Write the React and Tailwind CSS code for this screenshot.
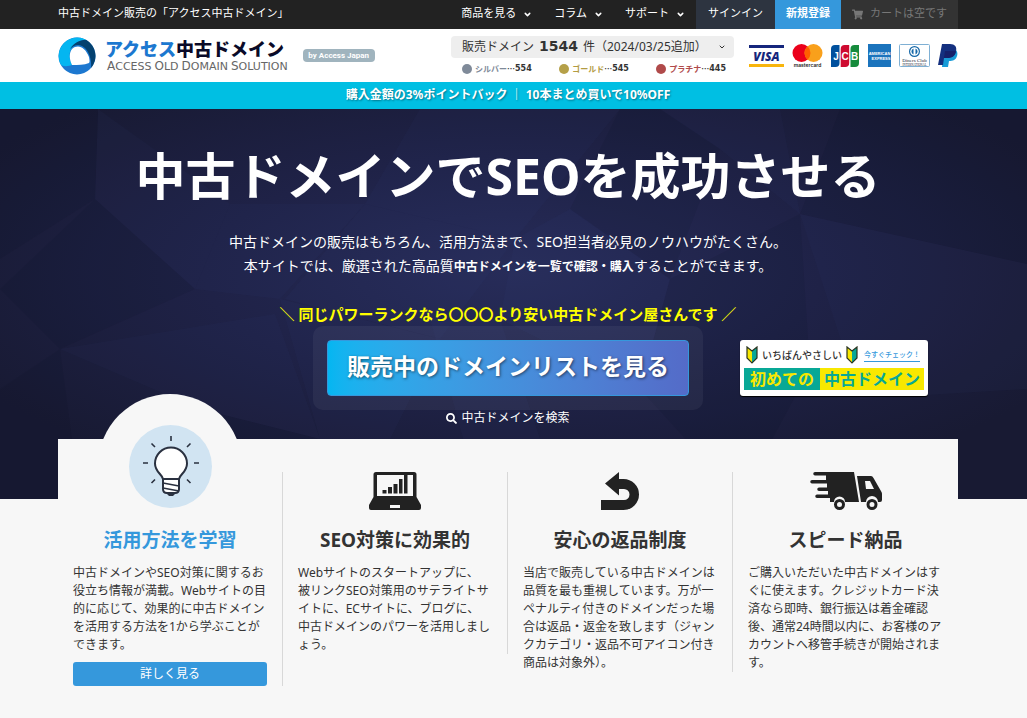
import React from 'react';
import { FaShoppingCart, FaSearch } from 'react-icons/fa';
import { ChevronDown } from 'lucide-react';

const navItems = ['商品を見る', 'コラム', 'サポート'];

const taglineWords = ['Access', 'Old', 'Domain', 'Solution'];

const ranks = [
  { name: 'シルバー', count: 554, text: 'text-[#7f8a99]', dot: 'bg-[#7f8a99]' },
  { name: 'ゴールド', count: 545, text: 'text-[#b39c43]', dot: 'bg-[#b5a048]' },
  { name: 'プラチナ', count: 445, text: 'text-[#b04a4a]', dot: 'bg-[#b04a4a]' }
];

const LogoMark = () => (
  <svg className="w-[38px] h-[38px] shrink-0" viewBox="0 0 38 38" aria-hidden="true">
    <circle cx="19" cy="19" r="18.5" fill="#1c78d0" />
    <path d="M28 2.800A18.500 18.500 0 0 0 3 28C7 30 11 29 14 28C10 20 11 12 16 9C19 5 23 3 28 2.800Z" fill="#04b6f1" />
    <path d="M28 2.800A18.500 18.500 0 0 1 33 31C34 21 30 12 24 9C20 7 16 8 12 12C16 6 21 3 28 2.800Z" fill="#04416f" />
    <path d="M14 12C20 7 27 10 31 20C31.500 23 32 25 31 26C26 28 20 28 14 28C11 22 11 16 14 12Z" fill="#fff" />
  </svg>
);

const PaymentLogos = () => (
  <div className="flex items-center justify-between w-[209px]">
    <svg className="w-[35px] h-[22px]" viewBox="0 0 35 22" role="img" aria-label="VISA">
      <path d="M0 0h35v3H0z" fill="#15267c" />
      <path d="M0 19h35v3H0z" fill="#f8b50c" />
      <text x="17.500" y="15.500" textAnchor="middle" fontFamily="Open Sans, sans-serif" fontWeight="800" fontStyle="italic" fontSize="12" fill="#15267c">VISA</text>
    </svg>
    <svg className="w-[31px] h-6" viewBox="0 0 31 24" role="img" aria-label="mastercard">
      <circle cx="9.500" cy="9" r="9" fill="#eb001b" />
      <circle cx="21.500" cy="9" r="9" fill="#f9a01b" />
      <path d="M15.500 2.300a9 9 0 0 1 0 13.400a9 9 0 0 1 0-13.400Z" fill="#ff5f00" />
      <text x="15.500" y="23" textAnchor="middle" fontFamily="Inter, sans-serif" fontWeight="600" fontSize="5" fill="#222">mastercard</text>
    </svg>
    <svg className="w-7 h-[22px]" viewBox="0 0 28 22" role="img" aria-label="JCB">
      <path d="M4 0h4.500v18a4 4 0 0 1-4 4H0V4a4 4 0 0 1 4-4Z" fill="#00509d" />
      <path d="M13.700 0h4.500v18a4 4 0 0 1-4 4H9.700V4a4 4 0 0 1 4-4Z" fill="#ce0a30" />
      <path d="M23.500 0H28v18a4 4 0 0 1-4 4h-4.500V4a4 4 0 0 1 4-4Z" fill="#168b3c" />
      <g fontFamily="Liberation Sans, sans-serif" fontWeight="700" fontSize="10" fill="#fff" textAnchor="middle">
        <text x="5" y="14.500">J</text>
        <text x="14" y="14.500">C</text>
        <text x="23.500" y="14.500">B</text>
      </g>
    </svg>
    <svg className="w-[23px] h-[23px]" viewBox="0 0 23 23" role="img" aria-label="American Express">
      <path d="M0 0h23v23H0z" fill="#1b74bd" />
      <text x="11.500" y="11" textAnchor="middle" fontFamily="Liberation Sans, sans-serif" fontWeight="700" fontSize="4" fill="#fff">AMERICAN</text>
      <text x="13" y="16" textAnchor="middle" fontFamily="Liberation Sans, sans-serif" fontWeight="700" fontSize="4" fill="#fff">EXPRESS</text>
    </svg>
    <svg className="w-[31px] h-[23px]" viewBox="0 0 31 23" role="img" aria-label="Diners Club International">
      <rect x="0.500" y="0.500" width="30" height="22" rx="1" fill="#fff" stroke="#7fb0d4" />
      <circle cx="15.500" cy="7.500" r="5.500" fill="#1668a8" />
      <circle cx="15.500" cy="7.500" r="4.300" fill="#fff" />
      <path d="M14.500 4.500v6a3.200 3.200 0 0 1 0-6ZM16.500 4.500v6a3.200 3.200 0 0 0 0-6Z" fill="#1668a8" />
      <text x="15.500" y="17.500" textAnchor="middle" fontFamily="Liberation Serif, serif" fontSize="5" fill="#223">Diners Club</text>
      <text x="15.500" y="21.500" textAnchor="middle" fontFamily="Liberation Serif, serif" fontSize="3" fill="#223">INTERNATIONAL</text>
    </svg>
    <svg className="w-5 h-6" viewBox="0 0 20 24" role="img" aria-label="PayPal">
      <path d="M6 5h10c3 1 4 4 3 7c-1 4-4 5-8 5l-1 6H4Z" fill="#179bd7" />
      <path d="M4 0h8c5 0 7 3 6 7c-1 5-4 7-9 7H6l-1 7H0Z" fill="#14307f" />
      <path d="M7 7h9c1.500 0 2 .5 2 .5c-1 4.500-4 6.500-9 6.500H6Z" fill="#15206a" />
    </svg>
  </div>
);

const HeroPattern = () => (
  <svg className="absolute inset-0 w-full h-full" viewBox="0 0 1027 390" preserveAspectRatio="none" aria-hidden="true">
    <defs>
      <radialGradient id="heroGlow" cx="0.5" cy="0.42" r="0.6">
        <stop offset="0" stopColor="#272c59" />
        <stop offset="0.5" stopColor="#1f2247" />
        <stop offset="1" stopColor="#181a33" />
      </radialGradient>
    </defs>
    <path d="M0 0h1027v390H0z" fill="url(#heroGlow)" />
    <g fill="#5a66c8" fillOpacity="0.035">
      <path d="M98 0 230 95 195 180 95 90Z" />
      <path d="M420 0 620 0 515 130 365 95Z" />
      <path d="M230 95 365 95 280 190 195 180Z" />
      <path d="M515 130 570 100 670 170 640 280 500 210Z" />
      <path d="M365 95 515 130 440 230 285 190Z" />
      <path d="M660 0 780 0 800 105 720 40Z" />
      <path d="M60 240 275 205 320 330 200 300Z" />
      <path d="M430 210 500 210 560 390 480 390Z" />
      <path d="M800 105 1027 155 1027 280 860 290Z" />
      <path d="M280 190 440 230 360 390 320 330Z" />
    </g>
    <g fill="#05071a" fillOpacity="0.08">
      <path d="M0 0 98 0 95 90 0 150Z" />
      <path d="M840 0 1027 0 1027 155 800 105Z" />
      <path d="M0 180 95 90 195 180 60 240Z" />
      <path d="M620 0 660 0 720 40 670 170 570 100Z" />
      <path d="M640 280 670 170 800 105 810 260 740 390Z" />
      <path d="M0 280 60 240 80 390 0 390Z" />
      <path d="M200 300 320 330 360 390 180 390Z" />
    </g>
  </svg>
);

const BulbIcon = () => (
  <svg className="w-[83px] h-[83px]" viewBox="0 0 83 83" aria-hidden="true">
    <circle cx="41.500" cy="41.500" r="41.500" fill="#d1e4f2" />
    <g stroke="#2a3140" strokeWidth="1.600" fill="none">
      <path d="M42 11v5M22.500 18.500l3.500 3.500M61.500 18.500l-3.500 3.500M14 38h5M65 38h5M22.500 58l3.500-3.500M61.500 58l-3.500-3.500" />
      <path d="M34 54C33 49 26 47 26 38.500a16 16 0 0 1 32 0C58 47 51 49 50 54Z" fill="#fff" strokeWidth="2" />
      <path d="M34 54v10q0 4 4 4h8q4 0 4-4V54Z" fill="#fff" strokeWidth="2" />
      <path d="M34 58l16 3M34 63l16 3" />
    </g>
    <path d="M37 68h10l-3 3h-4Z" fill="#2a3140" />
  </svg>
);

const LaptopIcon = () => (
  <svg className="w-[52px] h-[38px]" viewBox="0 0 52 38" fill="#222" aria-hidden="true">
    <path fillRule="evenodd" d="M7 0h38q2.500 0 2.500 2.500V25l4.500 8v3q0 2-2 2H2q-2 0-2-2v-3l4.500-8V2.500Q4.500 0 7 0ZM8 3v21h36V3ZM21 33v3h10v-3Z" />
    <path d="M13.500 18h4v3.500h-4zM19 15h4v6.500h-4zM24.500 12h4v9.500h-4zM30 7h3.500v14.500H30zM35 3h3.500v18.500H35z" />
  </svg>
);

const ReturnIcon = () => (
  <svg className="w-[38px] h-[38px]" viewBox="0 0 38 38" fill="#222" aria-hidden="true">
    <path d="M4 11.500 18 0v7h4.500a15.500 15.500 0 0 1 0 31H0V28h23a5.500 5.500 0 0 0 0-11h-5v6.500Z" />
  </svg>
);

const TruckIcon = () => (
  <svg className="w-[72px] h-[38px]" viewBox="0 0 72 38" fill="#222" aria-hidden="true">
    <path d="M5 0h39l5 30H35a5.500 5.500 0 0 0-11 0h-4v-4H7a1.500 1.500 0 0 1 0-3.500h11v-3.500H9a1.700 1.700 0 0 1 0-3.500h8v-4H2a1.700 1.700 0 0 1 0-3.500h14V3.500H5A1.700 1.700 0 0 1 5 0Z" />
    <path fillRule="evenodd" d="M47 4h14q1.500 0 2.500 2l8 14q.5 1 .5 2v6q0 2-2 2h-2a6 6 0 0 0-12 0h-5ZM55 9l1 8h8l-4-8Z" />
    <path fillRule="evenodd" d="M29.500 27a5.500 5.500 0 1 1 0 11a5.500 5.500 0 0 1 0-11Zm0 3a2.500 2.500 0 1 0 0 5a2.500 2.500 0 0 0 0-5ZM62 27a5.500 5.500 0 1 1 0 11a5.500 5.500 0 0 1 0-11Zm0 3a2.500 2.500 0 1 0 0 5a2.500 2.500 0 0 0 0-5Z" />
  </svg>
);

const BeginnerMark = () => (
  <svg className="w-3 h-[18px] shrink-0" viewBox="0 0 12 18" aria-hidden="true">
    <path d="M1 1 6 5v12L1 12Z" fill="#f8e800" />
    <path d="M11 1 6 5v12l5-5Z" fill="#08a896" />
    <path d="M1 1 6 5 11 1v11l-5 5-5-5Z" fill="none" stroke="#2b3420" strokeWidth="1.200" />
  </svg>
);

const features = [
  {
    title: '活用方法を学習',
    lines: ['中古ドメインやSEO対策に関するお', '役立ち情報が満載。Webサイトの目', '的に応じて、効果的に中古ドメイン', 'を活用する方法を1から学ぶことが', 'できます。'],
    highlight: true
  },
  {
    title: 'SEO対策に効果的',
    lines: ['Webサイトのスタートアップに、', '被リンクSEO対策用のサテライトサ', 'イトに、ECサイトに、ブログに、', '中古ドメインのパワーを活用しまし', 'ょう。'],
    icon: <LaptopIcon />
  },
  {
    title: '安心の返品制度',
    lines: ['当店で販売している中古ドメインは', '品質を最も重視しています。万が一', 'ペナルティ付きのドメインだった場', '合は返品・返金を致します（ジャン', 'クカテゴリ・返品不可アイコン付き', '商品は対象外）。'],
    icon: <ReturnIcon />
  },
  {
    title: 'スピード納品',
    lines: ['ご購入いただいた中古ドメインはす', 'ぐに使えます。クレジットカード決', '済なら即時、銀行振込は着金確認', '後、通常24時間以内に、お客様のア', 'カウントへ移管手続きが開始されま', 'す。'],
    icon: <TruckIcon />
  }
];

const Container = ({ className, children }) => (
  <div className="pr-[11px]">
    <div className={`mx-auto max-w-[900px] ${className || ''}`}>{children}</div>
  </div>
);

const App = () => {
  return (
    <div className="min-h-screen bg-[#f7f7f7] text-[#333] font-['Noto_Sans','Noto_Sans_CJK_JP',sans-serif]">
      {/* Top bar */}
      <div className="bg-[#222] text-white text-[11px]">
        <Container className="flex items-stretch justify-between h-[29px]">
          <p className="leading-[26px]">中古ドメイン販売の「アクセス中古ドメイン」</p>
          <nav className="flex items-stretch leading-[26px]">
            {navItems.map(item => (
              <button key={item} type="button" className="flex items-center gap-[7px] px-[11px]">
                <span className="h-full">{item}</span>
                <ChevronDown className="w-[9px] h-[9px]" strokeWidth={4} />
              </button>
            ))}
            <a href="#signin" className="bg-[#2d3440] px-3">サインイン</a>
            <a href="#signup" className="bg-[#3598dc] px-[11px] font-bold">新規登録</a>
            <a href="#cart" className="flex items-center gap-[7px] px-[11px] bg-[#333] text-[#777]">
              <FaShoppingCart className="w-[11px] h-[11px]" />
              <span className="h-full">カートは空です</span>
            </a>
          </nav>
        </Container>
      </div>

      {/* Header */}
      <header className="bg-white">
        <Container className="flex items-center h-[53px]">
          <a href="#home" className="flex items-center gap-[9px]">
            <LogoMark />
            <span className="block">
              <span className="block text-[18px] leading-[22px] font-black text-[#0a0a28]">
                <span className="text-[#1c78d0]">アクセス</span>中古ドメイン
              </span>
              <span className="flex gap-[3px] pl-[2px] text-[11px] leading-[12px] uppercase text-[#666] font-['DejaVu_Sans',sans-serif]">
                {taglineWords.map(word => (
                  <span key={word} className="block first-letter:text-[12px]">{word}</span>
                ))}
              </span>
            </span>
          </a>
          <span className="ml-[15px] w-[72px] rounded-sm bg-[#a0b4be] text-center text-[8px] leading-[13px] font-bold text-white whitespace-nowrap font-['Roboto',sans-serif]">
            by Access Japan
          </span>
          <div className="ml-auto mr-[15px] w-[283px]">
            <button type="button" className="flex items-center w-full h-[22px] pl-[11px] pr-2 rounded-sm bg-[#eee] text-[12px] whitespace-nowrap">
              <span>販売ドメイン</span>
              <strong className="mx-[5px] text-[14px] font-['DejaVu_Sans',sans-serif]">1544</strong>
              <span>件（2024/03/25追加）</span>
              <ChevronDown className="ml-auto w-2 h-2" strokeWidth={3} />
            </button>
            <ul className="flex justify-between mt-1 pl-[11px] pr-2 text-[8px] leading-[14px] font-bold">
              {ranks.map(rank => (
                <li key={rank.name} className="flex items-center">
                  <span className={`w-[10px] h-[10px] mr-[3px] rounded-full ${rank.dot}`} />
                  <span className={rank.text}>{rank.name}</span>
                  <span className="font-['Noto_Sans_CJK_JP',sans-serif]">…</span>
                  <span className="font-['DejaVu_Sans',sans-serif]">{rank.count}</span>
                </li>
              ))}
            </ul>
          </div>
          <PaymentLogos />
        </Container>
      </header>

      {/* Campaign banner */}
      <div className="bg-[#00bfe3]">
        <Container className="h-[27px] text-center text-[12px] leading-[26px] font-bold text-white text-shadow-[1px_1px_2px_#0006]">
          購入金額の3%ポイントバック ｜ 10本まとめ買いで10%OFF
        </Container>
      </div>

      {/* Hero */}
      <section className="relative bg-[#1c1f3c] text-white overflow-hidden">
        <HeroPattern />
        <div className="relative">
          <Container className="pt-[37px] pb-[73px] text-center">
            <h1 className="text-[50px] leading-[60px] font-bold">中古ドメインでSEOを成功させる</h1>
            <p className="mt-6 text-[14px] leading-6">
              中古ドメインの販売はもちろん、活用方法まで、SEO担当者必見のノウハウがたくさん。
              <br />
              本サイトでは、厳選された高品質<strong className="text-[12px]">中古ドメインを一覧で確認・購入</strong>することができます。
            </p>
            <p className="mt-[23px] text-[15px] leading-6 font-bold text-[#ff0]">
              ＼ 同じパワーランクなら〇〇〇より安い中古ドメイン屋さんです ／
            </p>
            <div className="grid grid-cols-[1fr_auto_1fr] items-center">
              <div className="col-start-2 w-[390px] p-[14px] rounded-[10px] bg-white/5">
                <a
                  href="#list"
                  className="block h-14 rounded border border-[#3598dc] bg-linear-to-r from-[#04b6f1] to-[#546bc8] text-[23px] leading-[50px] font-bold text-shadow-[1px_1px_3px_#0008]"
                >
                  販売中のドメインリストを見る
                </a>
              </div>
              <a href="#beginner" className="ml-[37px] w-[188px] h-14 px-1 pt-[6px] rounded-[3px] bg-white text-[#333] whitespace-nowrap shadow-[0_1px_1px_#000]">
                <span className="flex items-center h-[22px] pl-[2px] pb-1 text-[10px] leading-[18px] font-medium">
                  <BeginnerMark />
                  <span className="mx-1">いちばんやさしい</span>
                  <BeginnerMark />
                  <span className="ml-auto mr-1 border-b border-[#3598dc] text-[7px] leading-3 text-[#3598dc]">今すぐチェック！</span>
                </span>
                <span className="flex text-[16px] leading-[22px] font-bold">
                  <span className="w-[76px] bg-[#08a896] text-[#f8e800]">初めての</span>
                  <span className="flex-1 bg-[#f8e800] text-[#08a896]">中古ドメイン</span>
                </span>
              </a>
            </div>
            <div className="flex justify-center">
              <a href="#search" className="flex items-center gap-1 text-[12px] leading-4">
                <FaSearch className="w-[11px] h-[11px]" />
                中古ドメインを検索
              </a>
            </div>
          </Container>
        </div>
      </section>

      {/* Features */}
      <section className="relative -mt-[60px]">
        <Container className="grid grid-cols-4 items-start pt-[33px] bg-[#f7f7f7]">
          {features.map(feature => (
            <div key={feature.title} className="relative px-[15px] border-r border-[#d8d8d8] last:border-r-0">
              {feature.highlight ? (
                <div className="absolute -top-[78px] left-1/2 -translate-x-1/2 flex items-center justify-center w-36 h-36 rounded-full bg-[#f7f7f7]">
                  <BulbIcon />
                </div>
              ) : null}
              <div className="flex justify-center h-[38px]">{feature.icon}</div>
              <h2 className={`relative mt-4 mb-[10px] text-center text-[19px] leading-7 font-bold ${feature.highlight ? 'text-[#3598dc]' : ''}`}>
                {feature.title}
              </h2>
              <p className="text-[12px] leading-[18px] whitespace-nowrap">
                {feature.lines.map(line => (
                  <React.Fragment key={line}>
                    {line}
                    <br />
                  </React.Fragment>
                ))}
              </p>
              {feature.highlight && (
                <a href="#learn" className="block mt-2 rounded-[3px] bg-[#3598dc] text-center text-[12px] leading-6 text-white">
                  詳しく見る
                </a>
              )}
            </div>
          ))}
        </Container>
      </section>
    </div>
  );
};

export default App;
